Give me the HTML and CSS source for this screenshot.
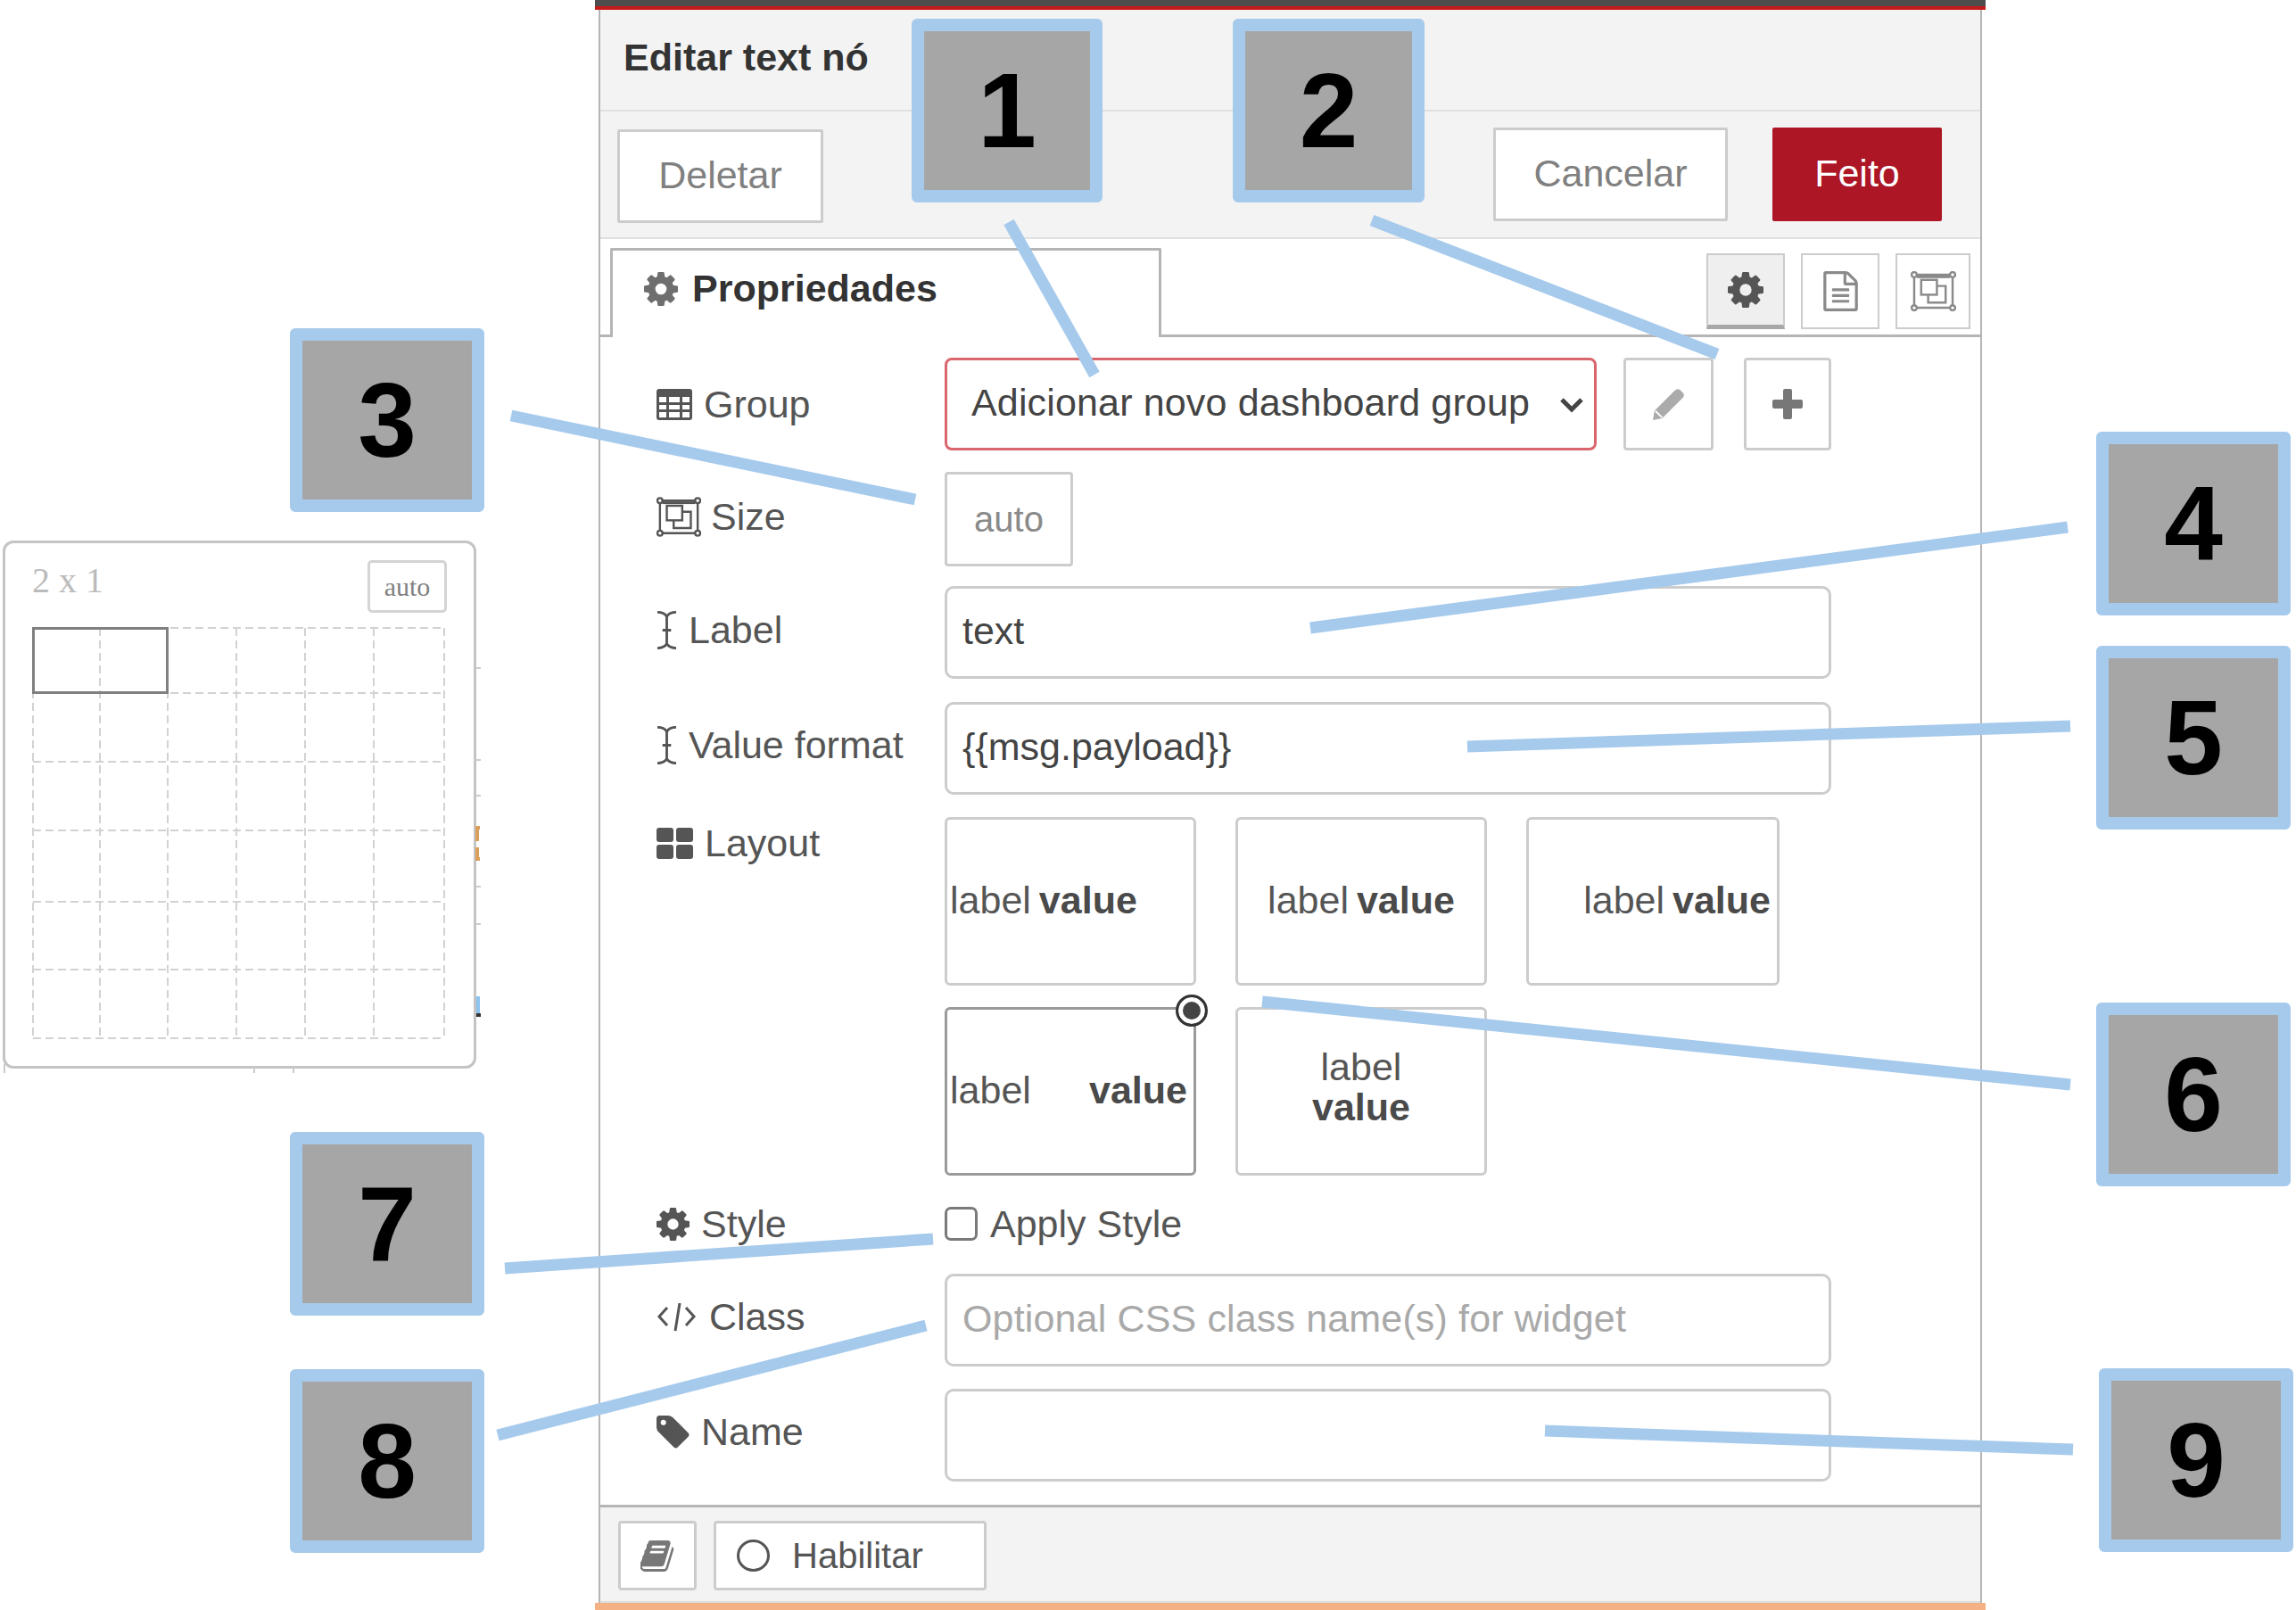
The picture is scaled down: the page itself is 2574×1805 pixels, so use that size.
FILE: index.html
```html
<!DOCTYPE html>
<html lang="pt">
<head>
  <meta charset="UTF-8">
  <title>Editar text nó</title>
  <link rel="stylesheet" href="styles.css">
</head>
<body>
  <svg class="icon-defs" width="0" height="0">
    <symbol id="i-gear" viewBox="128 128 1536 1536">
      <path d="M1152 896q0-106-75-181t-181-75-181 75-75 181 75 181 181 75 181-75 75-181zm512-109v222q0 12-8 23t-20 13l-185 28q-19 54-39 91 35 50 107 138 10 12 10 25t-9 23q-27 37-99 108t-94 71q-12 0-26-9l-138-108q-44 23-91 38-16 136-29 186-7 28-36 28h-222q-14 0-24.5-8.5t-11.5-21.5l-28-184q-49-16-90-37l-141 107q-10 9-25 9-14 0-25-11-126-114-165-168-7-10-7-23 0-12 8-23 15-21 51-66.5t54-70.5q-27-50-41-99l-183-27q-13-2-21-12.5t-8-23.5v-222q0-12 8-23t19-13l186-28q14-46 39-92-40-57-107-138-10-12-10-24 0-10 9-23 26-36 98.5-107.5t94.5-71.5q13 0 26 10l138 107q44-23 91-38 16-136 29-186 7-28 36-28h222q14 0 24.5 8.5t11.5 21.5l28 184q49 16 90 37l142-107q9-9 24-9 13 0 25 10 129 119 165 170 7 8 7 22 0 12-8 23-15 21-51 66.5t-54 70.5q26 50 41 98l183 28q13 2 21 12.5t8 23.5z"/>
    </symbol>
    <symbol id="i-cursor" viewBox="0 0 24 46">
      <path d="M1 2 Q9 2 12 7 Q15 2 23 2 M12 7 V39 M1 44 Q9 44 12 39 Q15 44 23 44 M7 23 H17" fill="none" stroke="currentColor" stroke-width="3"/>
    </symbol>
    <symbol id="i-size" viewBox="0 0 52 46">
      <g fill="none" stroke="currentColor" stroke-width="2.5">
        <path d="M7 4 H45 M7 42 H45 M4 7 V39 M48 7 V39"/>
        <circle cx="4" cy="4" r="3"/><circle cx="48" cy="4" r="3"/>
        <circle cx="4" cy="42" r="3"/><circle cx="48" cy="42" r="3"/>
        <rect x="12" y="10" width="18" height="17" fill="#fff"/>
        <path d="M30 17 H40 V36 H20 V27"/>
      </g>
      <rect x="7" y="5" width="38" height="3" fill="currentColor"/>
    </symbol>
  </svg>

  <div class="page">
    <section class="editor">
      <div class="editor-top"></div>
      <div class="editor-frame">
        <header class="editor-title">Editar text nó</header>

        <div class="toolbar">
          <button class="btn btn-delete">Deletar</button>
          <button class="btn btn-cancel">Cancelar</button>
          <button class="btn btn-done">Feito</button>
        </div>

        <div class="tabs">
          <div class="tab">
            <svg class="tab-gear"><use href="#i-gear"/></svg>
            <span>Propriedades</span>
          </div>
          <div class="tab-tools">
            <button class="tool tool-active"><svg class="tool-gear"><use href="#i-gear"/></svg></button>
            <button class="tool">
              <svg class="tool-doc" viewBox="128 0 1536 1792"><path d="M1596 380q28 28 48 76t20 88v1152q0 40-28 68t-68 28h-1344q-40 0-68-28t-28-68v-1600q0-40 28-68t68-28h896q40 0 88 20t76 48zm-444-244v376h376q-10-29-22-41l-313-313q-12-12-41-22zm384 1528v-1024h-416q-40 0-68-28t-28-68v-416h-768v1536h1280zm-1024-864q0-14 9-23t23-9h704q14 0 23 9t9 23v64q0 14-9 23t-23 9h-704q-14 0-23-9t-9-23v-64zm736 224q14 0 23 9t9 23v64q0 14-9 23t-23 9h-704q-14 0-23-9t-9-23v-64q0-14 9-23t23-9h704zm0 256q14 0 23 9t9 23v64q0 14-9 23t-23 9h-704q-14 0-23-9t-9-23v-64q0-14 9-23t23-9h704z"/></svg>
            </button>
            <button class="tool tool-narrow"><svg class="tool-size"><use href="#i-size"/></svg></button>
          </div>
        </div>

        <form class="form">
          <div class="row row-group">
            <label class="field-label">
              <svg class="ic-table" viewBox="0 0 40 35">
                <path fill-rule="evenodd" d="M3 0H37Q40 0 40 3V32Q40 35 37 35H3Q0 35 0 32V3Q0 0 3 0ZM3 9V15H11V9ZM14 9V15H26V9ZM29 9V15H37V9ZM3 18V23H11V18ZM14 18V23H26V18ZM29 18V23H37V18ZM3 26V32H11V26ZM14 26V32H26V26ZM29 26V32H37V26Z"/>
              </svg>
              Group
            </label>
            <div class="select-wrap">
              <select class="select"><option>Adicionar novo dashboard group</option></select>
              <svg class="select-arrow" viewBox="0 0 28 18"><path d="M3 3 L14 14 L25 3" fill="none" stroke="currentColor" stroke-width="5"/></svg>
            </div>
            <button type="button" class="square-btn square-edit">
              <svg class="ic-pencil" viewBox="0 0 38 38"><path d="M0 38 L2 27 L26 3 Q29 0 32 2 L36 6 Q38 9 35 12 L11 36 Z"/><path d="M3 27 L11 35" fill="none" stroke="#fff" stroke-width="2"/></svg>
            </button>
            <button type="button" class="square-btn square-add">
              <svg class="ic-plus" viewBox="0 0 34 34"><path d="M12 2Q12 0 14 0H20Q22 0 22 2V12H32Q34 12 34 14V20Q34 22 32 22H22V32Q22 34 20 34H14Q12 34 12 32V22H2Q0 22 0 20V14Q0 12 2 12H12Z"/></svg>
            </button>
          </div>

          <div class="row row-size">
            <label class="field-label">
              <svg class="ic-size"><use href="#i-size"/></svg>
              Size
            </label>
            <button type="button" class="size-btn">auto</button>
          </div>

          <div class="row row-label">
            <label class="field-label">
              <svg class="ic-cursor"><use href="#i-cursor"/></svg>
              Label
            </label>
            <input class="input" type="text" value="text">
          </div>

          <div class="row row-value">
            <label class="field-label">
              <svg class="ic-cursor"><use href="#i-cursor"/></svg>
              Value format
            </label>
            <input class="input" type="text" value="{{msg.payload}}">
          </div>

          <div class="row row-layout">
            <label class="field-label">
              <svg class="ic-layout" viewBox="0 0 41 35">
                <rect width="19" height="16" rx="3"/><rect x="22" width="19" height="16" rx="3"/>
                <rect y="19" width="19" height="16" rx="3"/><rect x="22" y="19" width="19" height="16" rx="3"/>
              </svg>
              Layout
            </label>
            <div class="layouts">
              <div class="layout layout-start"><span>label</span><b>value</b></div>
              <div class="layout layout-center"><span>label</span><b>value</b></div>
              <div class="layout layout-end"><span>label</span><b>value</b></div>
              <div class="layout layout-between layout-selected">
                <span>label</span><b>value</b>
                <i class="radio-mark"></i>
              </div>
              <div class="layout layout-stack"><span>label</span><b>value</b></div>
            </div>
          </div>

          <div class="row row-style">
            <label class="field-label">
              <svg class="ic-gear"><use href="#i-gear"/></svg>
              Style
            </label>
            <label class="check">
              <input class="checkbox" type="checkbox">
              Apply Style
            </label>
          </div>

          <div class="row row-class">
            <label class="field-label">
              <svg class="ic-code" viewBox="0 0 45 33"><path d="M12 6 L3 16 L12 26 M21 32 L26 1 M33 6 L42 16 L33 26" fill="none" stroke="currentColor" stroke-width="3"/></svg>
              Class
            </label>
            <input class="input" type="text" placeholder="Optional CSS class name(s) for widget">
          </div>

          <div class="row row-name">
            <label class="field-label">
              <svg class="ic-tag" viewBox="128 128 1536 1536"><path d="M576 448q0-53-37.5-90.5t-90.5-37.5-90.5 37.5-37.5 90.5 37.5 90.5 90.5 37.5 90.5-37.5 37.5-90.5zm1067 576q0 53-37 90l-491 492q-39 37-91 37-53 0-90-37l-715-716q-38-37-64.5-101t-26.5-117v-416q0-52 38-90t90-38h416q53 0 117 26.5t102 64.5l715 714q37 39 37 91z"/></svg>
              Name
            </label>
            <input class="input" type="text">
          </div>
        </form>

        <footer class="editor-foot">
          <button class="foot-btn foot-book">
            <svg class="ic-book" viewBox="128 128 1600 1536"><path d="M1703 478q40 57 18 129l-275 906q-19 64-76.5 107.5t-122.5 43.5h-923q-77 0-148.5-53.5t-99.5-131.5q-24-67-2-127 0-4 3-27t4-37q1-8-3-21.5t-3-19.5q2-11 8-21t16.5-23.5 16.5-23.5q23-38 45-91.5t30-91.5q3-10 .5-30t-.5-28q3-11 17-28t17-23q21-36 42-92t25-90q1-9-2.5-32t.5-28q4-13 22-30.5t22-22.5q19-26 42.5-84.5t27.5-96.5q1-8-3-25.5t-2-26.5q2-8 9-18t18-23 17-21q8-12 16.5-30.5t15-35 16-36 19.5-32 26.5-23.5 36-11.5 47.5 5.5l-1 3q38-9 51-9h761q74 0 114 56t18 130l-274 906q-36 119-71.5 153.5t-128.5 34.5h-869q-27 0-38 15-11 16-1 43 24 70 144 70h923q29 0 56-15.5t35-41.5l300-987q7-22 5-57 38 15 59 43zm-1064 2q-4 13 2 22.5t20 9.5h608q13 0 25.5-9.5t16.5-22.5l21-64q4-13-2-22.5t-20-9.5h-608q-13 0-25.5 9.5t-16.5 22.5zm-83 256q-4 13 2 22.5t20 9.5h608q13 0 25.5-9.5t16.5-22.5l21-64q4-13-2-22.5t-20-9.5h-608q-13 0-25.5 9.5t-16.5 22.5z"/></svg>
          </button>
          <button class="foot-btn foot-enable"><i class="enable-ring"></i>Habilitar</button>
        </footer>
      </div>
      <div class="editor-bottom"></div>
    </section>

    <!-- size picker popup -->
    <aside class="picker">
      <div class="picker-head">
        <span class="picker-size">2 x 1</span>
        <span class="picker-auto">auto</span>
      </div>
      <div class="picker-grid">
        <svg class="picker-lines" viewBox="0 0 463 462">
          <path d="M1 1V462 M76 1V462 M152 1V462 M229 1V462 M306 1V462 M383 1V462 M462 1V462"/>
          <path d="M1 1H463 M1 74H463 M1 151H463 M1 228H463 M1 308H463 M1 384H463 M1 461H463"/>
        </svg>
        <div class="picker-selected"></div>
      </div>
    </aside>

    <!-- lines from the numbered boxes, plus the clipped bits behind the popup -->
    <svg class="annotations" viewBox="0 0 2574 1805">
      <g class="leaders">
        <line x1="1131" y1="249" x2="1227" y2="420"/>
        <line x1="1538" y1="247" x2="1925" y2="397"/>
        <line x1="573" y1="466" x2="1026" y2="560"/>
        <line x1="1469" y1="704" x2="2318" y2="591"/>
        <line x1="1645" y1="837" x2="2321" y2="814"/>
        <line x1="1415" y1="1123" x2="2321" y2="1216"/>
        <line x1="566" y1="1422" x2="1046" y2="1389"/>
        <line x1="558" y1="1609" x2="1038" y2="1486"/>
        <line x1="1732" y1="1604" x2="2324" y2="1625"/>
      </g>
      <path class="stray-ticks" d="M533 749H539 M533 852H539 M533 892H539 M533 994H539 M533 1036H539 M285 1197V1203 M329 1197V1203 M5 1193V1203"/>
      <path class="stray-orange" d="M538 928H535V943 M535 950V963H538"/>
      <rect class="stray-blue" x="534" y="1117" width="4" height="19"/>
      <rect class="stray-dark" x="534" y="1136" width="5" height="4"/>
    </svg>

    <div class="callout callout-1">1</div>
    <div class="callout callout-2">2</div>
    <div class="callout callout-3">3</div>
    <div class="callout callout-4">4</div>
    <div class="callout callout-5">5</div>
    <div class="callout callout-6">6</div>
    <div class="callout callout-7">7</div>
    <div class="callout callout-8">8</div>
    <div class="callout callout-9">9</div>
  </div>
</body>
</html>
```

FILE: styles.css
```css
:root {
  --text: #555;
  --text-dark: #333;
  --line: #ccc;
  --line-dark: #b5b5b5;
  --panel-bg: #f3f3f3;
  --red: #ad1625;
  --callout-blue: #a6caec;
  --callout-grey: #a6a6a6;
}

* {
  box-sizing: border-box;
}

body {
  margin: 0;
  background: #fff;
  color: var(--text);
  font-family: "Liberation Sans", Arial, sans-serif;
  font-size: 43px;
}

button,
input,
select {
  font-family: inherit;
  font-size: inherit;
  color: inherit;
}

svg {
  display: block;
  flex: none;
  fill: currentColor;
}

.icon-defs {
  position: absolute;
}

.page {
  position: relative;
  width: 2574px;
  height: 1805px;
  overflow: hidden;
}

/* editor */
.editor {
  width: 1559px;
  margin-left: 667px;
}

.editor-top {
  height: 11px;
  background: #4d4d4d;
  border-bottom: 4px solid #c41a1a;
}

.editor-frame {
  margin: 0 4px;
  height: 1786px;
  display: flex;
  flex-direction: column;
  border-left: 2px solid var(--line-dark);
  border-right: 2px solid var(--line-dark);
}

.editor-bottom {
  height: 8px;
  background: #f4b183;
}

.editor-title {
  height: 114px;
  padding: 31px 0 0 26px;
  line-height: 44px;
  font-weight: bold;
  color: var(--text-dark);
  background: var(--panel-bg);
  border-bottom: 2px solid #e0e0e0;
}

.toolbar {
  height: 143px;
  display: flex;
  align-items: center;
  padding: 0 43px 0 19px;
  background: var(--panel-bg);
  border-bottom: 2px solid #e0e0e0;
}

.btn {
  height: 105px;
  padding: 0 0 3px;
  border: 3px solid var(--line);
  border-radius: 2px;
  background: #fff;
  color: #808080;
}

.btn-delete {
  width: 231px;
  margin-top: 4px;
  margin-right: auto;
}

.btn-cancel {
  width: 263px;
  margin-right: 50px;
}

.btn-done {
  width: 190px;
  border: 0;
  background: var(--red);
  color: #fff;
}

/* tabs */
.tabs {
  height: 110px;
  display: flex;
  align-items: flex-end;
  padding: 0 11px;
  background: #fff;
  border-bottom: 3px solid var(--line-dark);
}

.tab {
  width: 618px;
  height: 100px;
  margin-bottom: -3px;
  display: flex;
  align-items: center;
  gap: 16px;
  padding: 0 0 12px 35px;
  font-weight: bold;
  color: var(--text-dark);
  background: #fff;
  border: 3px solid var(--line-dark);
  border-bottom: 0;
  border-radius: 2px 2px 0 0;
}

.tab-gear {
  width: 38px;
  height: 38px;
  color: #6e6e6e;
}

.tab-tools {
  margin-left: auto;
  display: flex;
  gap: 18px;
  margin-bottom: 6px;
}

.tool {
  width: 88px;
  height: 85px;
  display: flex;
  align-items: center;
  justify-content: center;
  padding: 0;
  background: #fff;
  border: 2px solid var(--line);
}

.tool-active {
  background: #efefef;
  border-bottom: 5px solid #a8a8a8;
}

.tool-narrow {
  width: 84px;
}

.tool-gear {
  width: 40px;
  height: 40px;
  color: var(--text);
}

.tool-doc {
  width: 39px;
  height: 45px;
  color: #8a8a8a;
}

.tool-size {
  width: 51px;
  height: 45px;
  color: #8a8a8a;
}

/* form rows */
.form {
  flex: 1;
  padding: 23px 0 0 63px;
  background: #fff;
}

.row {
  display: flex;
  align-items: center;
}

.row-group { height: 104px; margin-bottom: 24px; }
.row-size { height: 106px; margin-bottom: 22px; }
.row-label { height: 104px; margin-bottom: 26px; }
.row-value { height: 104px; margin-bottom: 25px; }
.row-layout { height: 401px; margin-bottom: 36px; align-items: flex-start; }
.row-style { height: 38px; margin-bottom: 37px; }
.row-class { height: 104px; margin-bottom: 25px; }
.row-name { height: 104px; }

.field-label {
  width: 323px;
  flex: none;
  display: flex;
  align-items: center;
  gap: 13px;
}

.row-size .field-label,
.row-label .field-label {
  padding-bottom: 6px;
}

.row-value .field-label,
.row-class .field-label,
.row-name .field-label {
  padding-bottom: 8px;
}

.row-layout .field-label {
  padding-top: 5px;
}

.ic-table { width: 40px; height: 35px; }
.ic-size { width: 50px; height: 45px; margin-right: -2px; }
.ic-cursor { width: 23px; height: 45px; }
.ic-layout { width: 41px; height: 35px; }
.ic-gear { width: 37px; height: 37px; }
.ic-code { width: 45px; height: 33px; margin-right: 1px; }
.ic-tag { width: 37px; height: 37px; }
.ic-pencil { width: 36px; height: 36px; color: #ababab; }
.ic-plus { width: 34px; height: 34px; color: #777; }
.ic-book { width: 38px; height: 35px; color: #777; }

.select-wrap {
  position: relative;
  width: 731px;
  height: 104px;
}

.select {
  width: 100%;
  height: 100%;
  appearance: none;
  padding: 0 0 4px 27px;
  background: #fff;
  border: 3px solid #d9666c;
  border-radius: 8px;
  color: #444;
  letter-spacing: 0.15px;
}

.select-arrow {
  position: absolute;
  right: 14px;
  top: 44px;
  width: 28px;
  height: 18px;
  color: #444;
  pointer-events: none;
}

.square-btn {
  height: 104px;
  display: flex;
  align-items: center;
  justify-content: center;
  padding: 0;
  background: #fff;
  border: 3px solid var(--line);
  border-radius: 4px;
}

.square-edit {
  width: 101px;
  margin-left: 30px;
}

.square-add {
  width: 98px;
  margin-left: 34px;
}

.size-btn {
  width: 144px;
  height: 106px;
  padding: 0;
  font-size: 40px;
  color: #8a8a8a;
  background: #fff;
  border: 3px solid var(--line);
  border-radius: 4px;
}

.input {
  width: 994px;
  height: 100%;
  padding: 0 17px 3px;
  background: #fff;
  border: 3px solid var(--line);
  border-radius: 10px;
  color: #444;
  outline: none;
}

.input::placeholder {
  color: #a9a9a9;
  opacity: 1;
  letter-spacing: 0.15px;
}

/* layout choices */
.layouts {
  width: 960px;
  display: flex;
  flex-wrap: wrap;
  column-gap: 44px;
  row-gap: 24px;
}

.layout {
  position: relative;
  width: 282px;
  height: 189px;
  display: flex;
  align-items: center;
  gap: 9px;
  padding: 0 7px 2px 3px;
  background: #fff;
  border: 3px solid var(--line);
  border-radius: 6px;
}

.layout b {
  color: #4a4a4a;
}

.layout-center {
  justify-content: center;
  padding: 0 0 2px;
}

.layout-end {
  width: 284px;
  justify-content: flex-end;
}

.layout-between {
  justify-content: space-between;
}

.layout-selected {
  border-color: #9a9a9a;
}

.layout-stack {
  flex-direction: column;
  justify-content: center;
  gap: 0;
  padding: 0 0 10px;
  line-height: 45px;
}

.radio-mark {
  position: absolute;
  top: -17px;
  right: -16px;
  width: 36px;
  height: 36px;
  background: #444;
  border: 3px solid #333;
  border-radius: 50%;
  box-shadow: inset 0 0 0 5px #fff;
}

.check {
  display: flex;
  align-items: center;
  gap: 14px;
  color: var(--text);
}

.checkbox {
  width: 37px;
  height: 38px;
  margin: 0;
  appearance: none;
  background: #fff;
  border: 3px solid #7a7a7a;
  border-radius: 7px;
}

/* footer */
.editor-foot {
  height: 110px;
  display: flex;
  align-items: center;
  gap: 19px;
  padding: 3px 0 0 20px;
  background: var(--panel-bg);
  border-top: 3px solid var(--line-dark);
  border-bottom: 2px solid #ddd;
}

.foot-btn {
  height: 78px;
  display: flex;
  align-items: center;
  padding: 0;
  font-size: 40px;
  background: #fff;
  border: 3px solid var(--line);
  border-radius: 4px;
}

.foot-book {
  width: 88px;
  justify-content: center;
}

.foot-enable {
  width: 306px;
  padding-left: 23px;
  gap: 25px;
}

.enable-ring {
  width: 37px;
  height: 36px;
  border: 3px solid var(--text);
  border-radius: 50%;
}

/* size picker */
.picker {
  position: absolute;
  left: 3px;
  top: 606px;
  width: 531px;
  height: 592px;
  padding: 19px 30px 0;
  background: #fff;
  border: 3px solid #c4c4c4;
  border-radius: 12px;
  font-family: "Liberation Serif", "Times New Roman", serif;
}

.picker-head {
  height: 59px;
  display: flex;
  justify-content: space-between;
}

.picker-size {
  font-size: 40px;
  line-height: 46px;
  color: #bbb;
}

.picker-auto {
  width: 89px;
  height: 59px;
  display: flex;
  align-items: center;
  justify-content: center;
  font-size: 30px;
  color: #808080;
  border: 3px solid #d4d4d4;
  border-radius: 5px;
}

.picker-grid {
  position: relative;
  width: 463px;
  height: 462px;
  margin-top: 16px;
}

.picker-lines {
  fill: none;
  stroke: #d2d2d2;
  stroke-width: 2;
  stroke-dasharray: 9 5;
}

.picker-selected {
  position: absolute;
  left: 0;
  top: 0;
  width: 153px;
  height: 75px;
  border: 3px solid #808080;
}

/* annotation layer */
.annotations {
  position: absolute;
  inset: 0;
  width: 2574px;
  height: 1805px;
  fill: none;
}

.leaders {
  stroke: var(--callout-blue);
  stroke-width: 13;
}

.stray-ticks {
  stroke: #ccc;
  stroke-width: 2;
}

.stray-orange {
  stroke: #d9a05c;
  stroke-width: 4;
}

.stray-blue {
  fill: #8cc4f0;
}

.stray-dark {
  fill: #333;
}

.callout {
  position: absolute;
  width: 218px;
  height: 206px;
  display: flex;
  align-items: center;
  justify-content: center;
  font-size: 118px;
  font-weight: bold;
  color: #000;
  background: var(--callout-grey);
  border: 14px solid var(--callout-blue);
  border-radius: 6px;
}

.callout-1 { left: 1022px; top: 21px; width: 214px; }
.callout-2 { left: 1382px; top: 21px; width: 215px; }
.callout-3 { left: 325px; top: 368px; }
.callout-4 { left: 2350px; top: 484px; }
.callout-5 { left: 2350px; top: 724px; }
.callout-6 { left: 2350px; top: 1124px; }
.callout-7 { left: 325px; top: 1269px; }
.callout-8 { left: 325px; top: 1535px; }
.callout-9 { left: 2353px; top: 1534px; }
```
